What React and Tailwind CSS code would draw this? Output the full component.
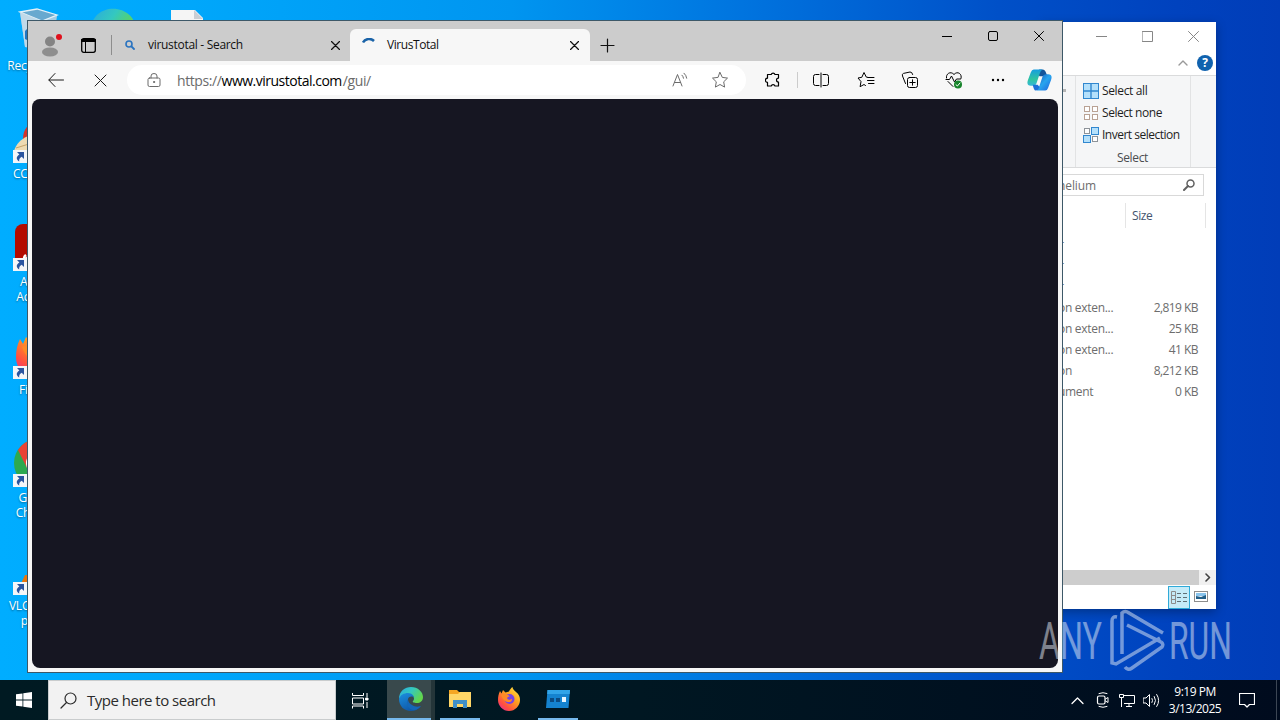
import React from 'react';

const files = [
  { type: 'on exten...', size: '2,819 KB' },
  { type: 'on exten...', size: '25 KB' },
  { type: 'on exten...', size: '41 KB' },
  { type: 'on', size: '8,212 KB' },
  { type: 'ument', size: '0 KB' },
];

// Line icon base, 1px strokes on a pixel grid
function Icon({ size = 16, className = '', children }) {
  return (
    <svg
      width={size}
      height={size}
      viewBox={`0 0 ${size} ${size}`}
      fill="none"
      stroke="currentColor"
      strokeLinecap="round"
      strokeLinejoin="round"
      className={`shrink-0 ${className}`}
    >
      {children}
    </svg>
  );
}

function CloseIcon({ size = 9, className = '' }) {
  return (
    <Icon size={size} className={className}>
      <path d={`M.5 .5L${size - 0.5} ${size - 0.5}M${size - 0.5} .5L.5 ${size - 0.5}`} strokeWidth="1.2" />
    </Icon>
  );
}

function EdgeLogo({ size = 26 }) {
  return (
    <svg width={size} height={size} viewBox="0 0 26 26">
      <defs>
        <linearGradient id="edgeTop" x1="0" y1="0" x2="1" y2=".5">
          <stop offset="0" stopColor="#2aa8e0" />
          <stop offset=".5" stopColor="#34c8c0" />
          <stop offset="1" stopColor="#62d64c" />
        </linearGradient>
        <linearGradient id="edgeBottom" x1="0" y1="0" x2=".5" y2="1">
          <stop offset="0" stopColor="#1b8fe0" />
          <stop offset="1" stopColor="#0f58a8" />
        </linearGradient>
      </defs>
      <path d="M1 13C1 5 7 1 13 1c7 0 12 5 12 10 0 4-3 6-6 6-3 0-5-1-4-2 2-2 1-6-3-6-5 0-9 1-11 4z" fill="url(#edgeTop)" />
      <path d="M1 13c1-4 5-6 9-6 4 0 6 3 6 5-1-2-5-2-6 1-1 5 4 9 9 8 2 0 4-1 4-1-2 3-6 5-10 5C6 25 1 20 1 13z" fill="url(#edgeBottom)" />
      <path d="M10 13c-3 5 1 11 6 11 3 0 5-2 7-4-3 1-6 1-9-1-2-1-4-3-4-6z" fill="#1467b8" />
    </svg>
  );
}

function FirefoxLogo({ size = 24 }) {
  return (
    <svg width={size} height={size} viewBox="0 0 24 24">
      <defs>
        <linearGradient id="fox" x1="1" y1="0" x2=".2" y2="1">
          <stop offset="0" stopColor="#fff04a" />
          <stop offset=".45" stopColor="#ffa01f" />
          <stop offset=".8" stopColor="#ff5040" />
          <stop offset="1" stopColor="#e8308c" />
        </linearGradient>
      </defs>
      <path d="M12 4.500c1-2 2-3.500 3.500-4.500 0 2 1.500 3 3.500 5 3 2 4 5 4 8 0 6-5 11-11 11S1 19 1 13c0-3 .5-6 2-9l1.500 2.500L6 3l2.500 2.500z" fill="url(#fox)" />
      <circle cx="12.500" cy="12" r="5" fill="#7542e5" />
      <path d="M4 8c3-1.500 7-1 9 1.500-2 0-3.500 1-2.500 2.500 1 1.200 3 1 4.500-.2C15.500 16.500 7 17 4 8z" fill="#ff8a26" />
    </svg>
  );
}

function RecycleBinIcon() {
  return (
    <svg width="48" height="48" viewBox="0 0 48 48">
      <path d="M6 5L43 9l-5 35-27-4z" fill="#a5cbe2" />
      <path d="M6 5l17-3 20 6-15 6z" fill="#68a9cf" stroke="#e4f1f8" strokeWidth="1.3" />
      <path d="M6 5l22 9-2 28-15-2z" fill="#c3dcea" opacity=".85" />
      <path d="M11 24l4-4v14l-4-2z" fill="#2076c4" />
      <path d="M15 20l4 3-1 6-3 1zM14 32l8 1-1 4-7-1z" fill="#2076c4" />
    </svg>
  );
}

function CleanerIcon() {
  return (
    <svg width="48" height="48" viewBox="0 0 48 48">
      <path d="M9 24C9 14 14 8 24 7c12 0 18 8 18 17s-8 18-18 18z" fill="#d4342a" />
      <path d="M0 36c2-7 7-12 14-15l15 18-14 6z" fill="#eedbb2" />
      <path d="M2 33l16-5" stroke="#c6a468" />
    </svg>
  );
}

function AcrobatIcon() {
  return (
    <svg width="48" height="48" viewBox="0 0 48 48">
      <rect x="1" y="1" width="46" height="46" rx="8" fill="#b30b00" />
      <path d="M12 32c-3 2-2 5 1 3 5-4 10-13 10-20 0-5 4-4 3 0-2 9 4 14 10 17" fill="none" stroke="#fff" strokeWidth="2.5" />
    </svg>
  );
}

function ChromeIcon() {
  return (
    <svg width="48" height="48" viewBox="0 0 48 48">
      <circle cx="24" cy="24" r="24" fill="#2da94f" />
      <path d="M4 11A24 24 0 0 1 45 12H24L13 29z" fill="#ea4335" />
      <path d="M24 12h21a24 24 0 0 1-21 36l10-18z" fill="#fbc116" />
      <circle cx="24" cy="24" r="12" fill="#fff" />
      <circle cx="24" cy="24" r="9" fill="#4285f4" />
    </svg>
  );
}

function VlcIcon() {
  return (
    <svg width="48" height="48" viewBox="0 0 48 48">
      <path d="M11 28h27l6 15H4z" fill="#e8760c" />
      <path d="M24 2l13 33q-13 6-26 0z" fill="#e8760c" />
      <path d="M20 13h8l4 9H16z" fill="#f2f2f2" />
    </svg>
  );
}

function ShortcutArrow() {
  return (
    <svg width="14" height="13" viewBox="0 0 14 13" className="absolute bottom-0 left-[-1px]">
      <rect width="14" height="13" fill="#f4f6f8" />
      <path d="M4 2h7v7L8.700 6.800C6.500 8 6 9.500 6.200 11.500 3 9.500 3 6.500 6.400 4.500z" fill="#2a55a0" />
    </svg>
  );
}

function DesktopItem({ icon, label, shortcut }) {
  return (
    <div className="flex h-[108px] w-[75px] flex-col items-center pt-[7px]">
      <div className="relative size-12">
        {icon}
        {shortcut && <ShortcutArrow />}
      </div>
      <p className="mt-[3px] w-[66px] text-center text-[12px] leading-[15px] tracking-[-0.2px] text-white [text-shadow:0_1px_2px_rgba(0,0,0,0.4)]">
        {label}
      </p>
    </div>
  );
}

function Desktop() {
  return (
    <div className="flex h-[680px]">
      <div className="flex flex-col">
        <DesktopItem icon={<RecycleBinIcon />} label="Recycle Bin" />
        <DesktopItem icon={<CleanerIcon />} label="CCleaner" shortcut />
        <DesktopItem icon={<AcrobatIcon />} label="Adobe Acrobat" shortcut />
        <DesktopItem icon={<FirefoxLogo size={48} />} label="Firefox" shortcut />
        <DesktopItem icon={<ChromeIcon />} label="Google Chrome" shortcut />
        <DesktopItem icon={<VlcIcon />} label="VLC media player" shortcut />
      </div>
      <DesktopItem icon={<EdgeLogo size={48} />} />
      <DesktopItem
        icon={
          <svg width="48" height="48" viewBox="0 0 48 48">
            <path d="M7 3h24l8 8v34H7z" fill="#f5f5f5" />
            <path d="M30 3l9 9h-9z" fill="#c9ced4" />
          </svg>
        }
      />
    </div>
  );
}

function SelectIcon({ kind }) {
  const cells = [
    [0, 0],
    [9, 0],
    [0, 9],
    [9, 9],
  ];
  if (kind === 'all') {
    return (
      <svg width="16" height="16" viewBox="0 0 16 16" className="shrink-0">
        <rect x=".5" y=".5" width="15" height="15" fill="#b4e0fb" stroke="#3187cf" />
        <path d="M8 0v16M0 8h16" stroke="#3187cf" strokeWidth="1.4" />
      </svg>
    );
  }
  return (
    <svg width="16" height="16" viewBox="0 0 16 16" className="shrink-0">
      {cells.map(([x, y], i) => {
        const on = kind === 'invert' && (i === 1 || i === 2);
        return on ? (
          <rect key={i} x={x === 0 ? 0.5 : 8.5} y={y === 0 ? 0.5 : 8.5} width="7" height="7" fill="#b4e0fb" stroke="#3187cf" />
        ) : (
          <rect key={i} x={x === 0 ? 1.5 : 9.5} y={y === 0 ? 1.5 : 9.5} width="5" height="5" fill="#fff" stroke={kind === 'none' ? '#b9a294' : '#8d9399'} />
        );
      })}
    </svg>
  );
}

function ExplorerWindow() {
  return (
    <section className="absolute left-[1040px] top-[22px] flex h-[587px] w-[176px] flex-col bg-white text-[12px] text-[#1e1e1e] shadow-[0_3px_10px_rgba(0,0,0,0.3)]">
      <div className="flex h-7 items-center justify-end gap-[35px] pr-[17px] text-[#868686]">
        <Icon size={11}><path d="M0 5.500h11" /></Icon>
        <Icon size={11}><path d="M.5 .5h10v10H.5z" /></Icon>
        <Icon size={11}><path d="M.5 .5l10 10M10.500 .5l-10 10" /></Icon>
      </div>
      <div className="flex h-[25px] items-center justify-end gap-[9px] pr-[3px]">
        <Icon size={10} className="text-[#999]"><path d="M1 7l4-4 4 4" strokeWidth="1.4" /></Icon>
        <span className="flex size-4 items-center justify-center rounded-full bg-[#1062ae] text-[12px] font-bold text-white">?</span>
      </div>

      <div className="flex h-[93px] border-y border-[#dadbdc] bg-[#f5f6f7]">
        <div className="flex w-[35px] justify-end pr-[9px] pt-[13px]">
          <span className="size-[3px] bg-[#b5b5b5]" />
        </div>
        <div className="flex w-[116px] flex-col border-x border-[#e2e3e4] pl-[7px] pt-1">
          <div className="flex h-[22px] shrink-0 items-center gap-[3px]">
            <SelectIcon kind="all" />
            <span className="whitespace-nowrap tracking-[-0.35px]">Select all</span>
          </div>
          <div className="flex h-[22px] shrink-0 items-center gap-[3px]">
            <SelectIcon kind="none" />
            <span className="whitespace-nowrap tracking-[-0.45px]">Select none</span>
          </div>
          <div className="flex h-[22px] shrink-0 items-center gap-[3px]">
            <SelectIcon kind="invert" />
            <span className="whitespace-nowrap tracking-[-0.5px]">Invert selection</span>
          </div>
          <p className="pr-2 pt-px text-center leading-[21px] tracking-[-0.35px] text-[#4a4d50]">Select</p>
        </div>
      </div>

      <div className="mt-[6px] flex h-[22px] w-[164px] items-center justify-between border border-[#d9d9d9] pl-[17px] pr-2 text-[#6d6d6d]">
        <span className="pt-px tracking-[-0.1px]">helium</span>
        <Icon size={12} className="text-[#606060]">
          <circle cx="7.500" cy="4.500" r="3.500" strokeWidth="1.500" />
          <path d="M5 7L1 11" strokeWidth="2" />
        </Icon>
      </div>

      <div className="mt-[7px] flex h-[25px] items-center">
        <div className="h-full w-[86px] border-r border-[#e5e5e5]" />
        <div className="flex h-full w-20 items-center border-r border-[#e5e5e5] pl-[6px] pt-px tracking-[-0.4px] text-[#44546e]">Size</div>
      </div>

      <div className="mt-[6px] flex flex-1 flex-col text-[#6d6d6d]">
        {[0, 1, 2].map((n) => (
          <div key={n} className="h-[21px] pl-[19px] leading-[21px]">r</div>
        ))}
        {files.map((f, i) => (
          <div key={i} className="flex h-[21px] items-center justify-between pl-[18px] pr-[18px] pt-px tracking-[-0.3px]">
            <span>{f.type}</span>
            <span className="tracking-[-0.55px]">{f.size}</span>
          </div>
        ))}
      </div>

      <div className="flex h-[15px] bg-[#f0f0f0]">
        <div className="w-[159px] bg-[#cdcdcd]" />
        <div className="flex flex-1 items-center justify-center text-[#404040]">
          <Icon size={9}><path d="M3 1l3.500 3.500L3 8" strokeWidth="1.600" /></Icon>
        </div>
      </div>
      <div className="flex h-6 items-start justify-end gap-1 pr-2 pt-px">
        <div className="flex h-[23px] w-[22px] items-center justify-center border border-[#30aad8] bg-[#c5ebf8]">
          <svg width="17" height="13" viewBox="0 0 17 13" fill="none">
            <path d="M.5 .5h4v12h-4zM.5 4.500h4M.5 8.500h4" stroke="#8c8c8c" />
            <path d="M6 2.500h4M12 2.500h4M6 6.500h4M12 6.500h4M6 10.500h4M12 10.500h4" stroke="#5f6f76" />
          </svg>
        </div>
        <svg width="14" height="11" viewBox="0 0 14 11" className="mt-[5px]">
          <rect x=".5" y=".5" width="13" height="10" fill="#fff" stroke="#8e8e8e" />
          <path d="M2 2h10v3H2z" fill="#8ac5ee" />
          <path d="M2 5l5 1 5-2v4H2z" fill="#235f88" />
        </svg>
      </div>
    </section>
  );
}

function TabStrip() {
  return (
    <div className="flex h-10 items-end bg-[#cccccc] text-[12px] text-[#111]">
      <div className="flex h-8 w-[84px] items-center pl-[11px]">
        <svg width="24" height="24" viewBox="0 0 24 24">
          <circle cx="11" cy="8.500" r="5" fill="#848484" />
          <ellipse cx="11" cy="19" rx="8" ry="4.500" fill="#8e8e8e" />
          <circle cx="20" cy="4" r="3" fill="#e0101c" />
        </svg>
        <Icon size={15} className="ml-[18px] text-black">
          <rect x=".7" y=".7" width="13.600" height="13.600" rx="2" strokeWidth="1.300" />
          <path d="M1 2.500h13" strokeWidth="3" />
          <path d="M4.500 3v11" />
        </Icon>
        <span className="ml-[15px] h-5 w-px bg-[#8d8d8d]" />
      </div>
      <div className="flex h-8 w-[238px] items-center pl-[13px] pr-[10px]">
        <Icon size={10} className="text-[#2b74c0]">
          <circle cx="4" cy="4" r="3" strokeWidth="1.600" />
          <path d="M6.500 6.500L9 9" strokeWidth="1.800" />
        </Icon>
        <span className="ml-[13px] flex-1 whitespace-nowrap tracking-[-0.3px]">virustotal - Search</span>
        <CloseIcon />
      </div>
      <div className="flex h-8 w-60 items-center rounded-t-md bg-[#f7f7f7] pl-[12px] pr-[11px]">
        <Icon size={14} className="text-[#1a63a8]">
          <path d="M1 4.500A7 7 0 0 1 12 3" strokeWidth="2.500" strokeLinecap="butt" />
        </Icon>
        <span className="ml-[11px] flex-1 whitespace-nowrap tracking-[-0.43px]">VirusTotal</span>
        <CloseIcon />
      </div>
      <div className="flex h-8 flex-1 items-center pl-[10px]">
        <Icon size={15}><path d="M7.500 1v13M1 7.500h13" strokeWidth="1.200" /></Icon>
      </div>
      <div className="flex gap-9 self-start pr-[18px] pt-[10px] text-black">
        <Icon size={10}><path d="M0 5.500h10" /></Icon>
        <Icon size={10}><rect x=".5" y=".5" width="9" height="9" rx="1.500" /></Icon>
        <Icon size={10}><path d="M.5 .5l9 9M9.500 .5l-9 9" /></Icon>
      </div>
    </div>
  );
}

function CopilotLogo() {
  return (
    <svg width="25" height="24" viewBox="0 0 26 24" className="shrink-0">
      <defs>
        <linearGradient id="copLeft" x1="0" y1="0" x2="0" y2="1">
          <stop offset="0" stopColor="#169de0" />
          <stop offset=".6" stopColor="#2fc4a0" />
          <stop offset="1" stopColor="#35b8d8" />
        </linearGradient>
        <linearGradient id="copRight" x1="0" y1="0" x2="1" y2="1">
          <stop offset="0" stopColor="#1650b8" />
          <stop offset=".5" stopColor="#28a5ee" />
          <stop offset="1" stopColor="#1f62dc" />
        </linearGradient>
      </defs>
      <path d="M13 1h3q3 0 4 4l1 3h-8L10 3z" fill="#15549a" />
      <path d="M7 1h9q-2 1-3 5l-3 9q-1 3-4 3H4q-5 0-3-6l3-8q1-3 3-3z" fill="url(#copLeft)" />
      <path d="M19 23h-9q2-1 3-5l3-9q1-3 4-3h2q5 0 3 6l-3 8q-1 3-3 3z" fill="url(#copRight)" />
      <path d="M6 17h5l2 2q-1 4-4 4-2 0-3-6z" fill="#1c70d8" />
    </svg>
  );
}

function Toolbar() {
  return (
    <div className="flex h-[38px] items-center bg-[#f7f7f7] text-[#1b1b1b]">
      <div className="flex w-[99px] items-center gap-[30px] pl-5">
        <Icon><path d="M15.500 8H1M7 1.500L.8 8 7 14.500" /></Icon>
        <Icon size={13}><path d="M1 1l11 11M12 1L1 12" /></Icon>
      </div>
      <div className="flex h-[30px] w-[619px] items-center rounded-full bg-white pl-5 pr-[17px] text-[#6b6b6b]">
        <Icon size={14}>
          <rect x="1" y="5" width="12" height="8.500" rx="1.500" />
          <path d="M4 5V3a3 2.500 0 0 1 6 0V5" />
          <circle cx="7" cy="9" r=".6" fill="currentColor" />
        </Icon>
        <p className="ml-4 flex-1 whitespace-nowrap text-[14px] tracking-[-0.4px]">
          https://<span className="mr-px tracking-[-0.5px] text-black">www.virustotal.com</span>/gui/
        </p>
        <Icon>
          <path d="M1 14L5.500 2.500 10 14M2.600 10.500h5.900M10 3.200q1.300 1.200 1.500 3M12 1.200q2.300 2 2.700 5" />
        </Icon>
        <Icon size={18} className="ml-[23px]">
          <path d="M9 1.500l2.300 4.900 5.200.7-3.800 3.700.9 5.300L9 13.500l-4.600 2.600.9-5.300L1.500 7.100l5.200-.7z" />
        </Icon>
      </div>
      <div className="flex flex-1 items-center pl-[19px] text-black">
        {/* extensions */}
        <Icon>
          <path d="M2.500 2.500h3.700a2 2 0 0 1 3.800 0h3.500v3.600a2 2 0 0 0 0 4v3.900H10a2 2 0 0 0-3.800 0H2.500v-3.600a2.100 2.100 0 0 1 0-4.200z" strokeWidth="1.200" />
        </Icon>
        <span className="ml-4 h-4 w-px bg-[#cccccc]" />
        <Icon className="ml-[15px]">
          <path d="M6 2.500H2.500q-2 0-2 2v7q0 2 2 2H6M10 2.500h3.500q2 0 2 2v7q0 2-2 2H10M8 1v14" />
        </Icon>
        {/* favorites */}
        <Icon size={18} className="ml-7">
          <path d="M11.500 6.500l-2.200-.4L7 1.500 4.800 6.300 1 7l3 3.600-.9 5.100L7 13.500l1.500 1M11 6.500h6M10.500 9.500H17M11.500 12.500H17" />
        </Icon>
        {/* collections */}
        <Icon size={18} className="ml-[26px]">
          <rect x="6.500" y="6.500" width="10" height="10" rx="2" />
          <path d="M11.500 8.800v5.400M8.800 11.500h5.400M4.500 12.500L1.500 5q-.8-2 1-2.600L9 1q2-.3 2.700 2.500" />
        </Icon>
        {/* browser essentials */}
        <Icon size={18} className="ml-[26px]">
          <path d="M1.500 7C.5 3 5.500-.5 9 3.500 12.500-.5 17.500 3 16 7.500M3 10.500l5 5" />
          <path d="M1 8.500h3.500L6.500 5l3 6L11.500 8h4" />
          <circle cx="13" cy="13.500" r="4" fill="#16832a" stroke="none" />
          <path d="M11 13.700l1.400 1.300 2.600-3" stroke="#fff" />
        </Icon>
        <svg width="14" height="4" viewBox="0 0 14 4" className="ml-7">
          <circle cx="2" cy="2" r="1.200" />
          <circle cx="7" cy="2" r="1.200" />
          <circle cx="12" cy="2" r="1.200" />
        </svg>
        <div className="ml-[22px]"><CopilotLogo /></div>
      </div>
    </div>
  );
}

function BrowserWindow() {
  return (
    <section className="absolute left-[27px] top-[20px] flex h-[653px] w-[1036px] flex-col border border-[#3d5868] bg-[#f7f7f7]">
      <TabStrip />
      <Toolbar />
      <main className="mx-1 mb-1 flex-1 rounded-lg bg-[#161622]" />
    </section>
  );
}

function Watermark() {
  return (
    <svg
      width="204"
      height="66"
      viewBox="0 0 204 66"
      className="absolute left-[1036px] top-[608px] opacity-50"
      fill="none"
      stroke="#e6ecf5"
    >
      <g fill="#e6ecf5" stroke="none" fontFamily="Roboto, sans-serif" fontSize="51" fontWeight="400">
        <text x="3" y="51" textLength="63" lengthAdjust="spacingAndGlyphs">ANY</text>
        <text x="133" y="51" textLength="63" lengthAdjust="spacingAndGlyphs">RUN</text>
      </g>
      <path d="M81 9q-5-1-5 4v42l4 1 44-26M86 46V5q3-3 7 0l34 20M91 17l34 17M89 59q3 4 7 1l30-21q2-3-1-5" strokeWidth="3.500" />
    </svg>
  );
}

function TaskbarApp({ active, running, children }) {
  return (
    <div
      className={`flex h-10 flex-col items-center justify-end ${
        active ? 'w-12 border-r-4 border-[#243539] bg-[#39494c]' : 'w-[49px]'
      }`}
    >
      <div className={`flex flex-1 items-center ${active ? 'pl-[3px]' : ''}`}>{children}</div>
      <div className={`h-[2px] ${active ? 'w-full' : 'w-10'} ${running ? 'bg-[#76b9ed]' : ''}`} />
    </div>
  );
}

function Taskbar() {
  return (
    <footer className="flex h-10 items-center bg-linear-to-r from-[#001a22] via-[#001722] to-[#000b1e] text-white">
      <div className="flex w-12 justify-center">
        <svg width="16" height="16" viewBox="0 0 16 16" fill="#fff">
          <path d="M0 2.300l6.500-.9v6.200H0zM7.300 1.200L16 0v7.600H7.300zM0 8.400h6.500v6.200L0 13.700zM7.300 8.400H16V16l-8.700-1.200z" />
        </svg>
      </div>
      <div className="flex h-10 w-72 items-center border border-[#c9cccd] bg-[#f2f2f2] pl-[11px] text-[#2b2b2b]">
        <Icon size={17}>
          <circle cx="10.500" cy="6.500" r="5.500" strokeWidth="1.200" />
          <path d="M6.500 10.500L1 16" strokeWidth="1.200" />
        </Icon>
        <span className="ml-[10px] text-[15px] tracking-[-0.5px]">Type here to search</span>
      </div>
      <div className="flex w-[51px] justify-center pr-[3px]">
        <Icon size={17}>
          <path d="M.5 1v2.500h11V1M.5 6h11v6H.5zM.5 16.500V14h11v2.500M15 1v4M15 10v6" strokeLinecap="butt" />
          <rect x="14" y="6" width="2" height="2" fill="#fff" />
        </Icon>
      </div>
      <TaskbarApp active running><EdgeLogo /></TaskbarApp>
      <TaskbarApp running>
        <svg width="22" height="18" viewBox="0 0 22 18">
          <path d="M0 0h8l2 2h12v15H0z" fill="#f5a623" />
          <path d="M0 4h9l2-2h11v15H0z" fill="#ffd667" />
          <path d="M4 18v-8h14v8h-4v-4H8v4z" fill="#3f8fc8" />
        </svg>
      </TaskbarApp>
      <TaskbarApp><FirefoxLogo /></TaskbarApp>
      <TaskbarApp running>
        <svg width="24" height="18" viewBox="0 0 24 18">
          <path d="M1.500 0H24l-1.500 18H0z" fill="#1583cf" />
          <path d="M1.500 0H24l-.3 4H1.200z" fill="#31a4e8" />
          <path d="M4 8h4v4H4zM10 8h4v4h-4z" fill="#0b4b82" />
          <path d="M16 7h4v5h-4z" fill="#e8f6ff" />
        </svg>
      </TaskbarApp>
      <div className="flex flex-1 items-center justify-end">
        <Icon size={13}><path d="M1 9.500L6.500 4l5.500 5.500" strokeWidth="1.300" /></Icon>
        <Icon size={16} className="ml-[11px]">
          <rect x="2.500" y="4" width="7.500" height="8" rx="1.500" strokeWidth="1.200" />
          <path d="M10.500 7l2.500-1.500v5L10.500 9M4 1.500q4-1.700 8 0M4 14.500q4 1.700 8 0" />
        </Icon>
        <Icon size={16} className="ml-2">
          <path d="M5 3.500h10.500v8H5M10 12v3M7 14.500h6M.5 2.500h4v3h-4zM2.500 6v9" strokeLinecap="butt" />
        </Icon>
        <Icon size={17} className="ml-2">
          <path d="M.5 6H3l3.500-3.500v12L3 11H.5zM9 6.500q1.200 2 0 4M11.300 4.500q2.500 4 0 8M13.700 2.500q4 6 0 12" />
        </Icon>
        <div className="ml-[7px] flex w-[56px] flex-col items-center text-[12px] leading-[17px] tracking-[-0.5px]">
          <span>9:19 PM</span>
          <span>3/13/2025</span>
        </div>
        <Icon size={16} className="ml-4">
          <path d="M.5 1.500h15v11h-5L8 15l-2.500-2.500h-5z" strokeWidth="1.200" />
        </Icon>
        <span className="ml-[21px] mr-[3px] h-10 w-px bg-[#3c4654]" />
      </div>
    </footer>
  );
}

export default function App() {
  return (
    <div className="relative h-[720px] w-[1280px] overflow-hidden bg-[linear-gradient(90deg,#00adff_0%,#00a7fb_15%,#0095f0_40%,#0074df_58%,#0050c8_78%,#0042be_92%,#013db8_100%)] font-['Open_Sans','Noto_Sans',sans-serif]">
      <Desktop />
      <ExplorerWindow />
      <BrowserWindow />
      <Watermark />
      <Taskbar />
    </div>
  );
}
